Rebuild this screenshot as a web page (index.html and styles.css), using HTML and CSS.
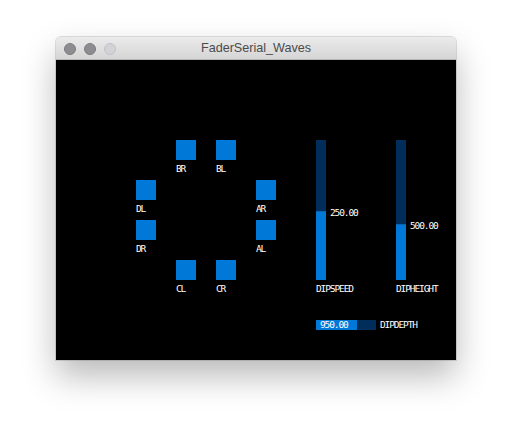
FILE: index.html
```html
<!DOCTYPE html>
<html lang="en">
<head>
  <meta charset="UTF-8" />
  <title>FaderSerial_Waves</title>
  <link rel="stylesheet" href="styles.css">
</head>
<body>
  <div class="window">
    <div class="titlebar">
      <div class="lights">
        <span class="light"></span>
        <span class="light"></span>
        <span class="light off"></span>
      </div>
      <div class="title">FaderSerial_Waves</div>
    </div>
    <div class="canvas">
      <div class="pads">
        <div class="cell"></div>
        <div class="cell"><div class="pad"></div><div class="lbl">BR</div></div>
        <div class="cell"><div class="pad"></div><div class="lbl">BL</div></div>
        <div class="cell"></div>

        <div class="cell"><div class="pad"></div><div class="lbl">DL</div></div>
        <div class="cell"></div>
        <div class="cell"></div>
        <div class="cell"><div class="pad"></div><div class="lbl">AR</div></div>

        <div class="cell"><div class="pad"></div><div class="lbl">DR</div></div>
        <div class="cell"></div>
        <div class="cell"></div>
        <div class="cell"><div class="pad"></div><div class="lbl">AL</div></div>

        <div class="cell"></div>
        <div class="cell"><div class="pad"></div><div class="lbl">CL</div></div>
        <div class="cell"><div class="pad"></div><div class="lbl">CR</div></div>
        <div class="cell"></div>
      </div>

      <div class="faders">
        <div class="vfader">
          <div class="track">
            <div class="fill" style="height:69px"><span class="value">250.00</span></div>
          </div>
          <div class="lbl name">DIPSPEED</div>
        </div>
        <div class="vfader">
          <div class="track">
            <div class="fill" style="height:56px"><span class="value">500.00</span></div>
          </div>
          <div class="lbl name">DIPHEIGHT</div>
        </div>
        <div class="hfader">
          <div class="htrack">
            <div class="hfill" style="width:41px"></div>
            <span class="hvalue">950.00</span>
          </div>
          <div class="lbl">DIPDEPTH</div>
        </div>
      </div>
    </div>
  </div>
</body>
</html>
```

FILE: styles.css
```css
* { margin: 0; padding: 0; box-sizing: border-box; }
html, body {
  width: 100%; height: 100%; overflow: hidden;
  background: #fff;
}
body { padding: 37px 0 0 56px; }

.window {
  width: 400px;
  border-radius: 5px 5px 0 0;
  box-shadow: 0 0 0 1px rgba(0,0,0,0.12), 0 16px 34px rgba(0,0,0,0.28);
}
.titlebar {
  height: 23px; position: relative;
  display: flex; align-items: center; justify-content: center;
  background: linear-gradient(to bottom, #ebebeb, #d5d5d5);
  border-bottom: 1px solid #b4b4b4;
  border-radius: 5px 5px 0 0;
}
.lights { position: absolute; left: 8px; top: 6px; display: flex; gap: 8px; }
.light {
  width: 12px; height: 12px; border-radius: 50%;
  background: #8d8c91; border: 1px solid #7c7b80;
}
.light.off { background: #d3d2d6; border-color: #c2c1c5; }
.title {
  font-family: "Liberation Sans", Arial, sans-serif; font-size: 12.6px;
  color: #4b4b4b;
}

.canvas {
  height: 300px; background: #000;
  display: flex; gap: 20px;
  padding: 80px 0 0 80px;
}

.lbl, .value, .hvalue {
  font-family: "DejaVu Sans Mono", monospace; font-size: 9.5px; line-height: 9px;
  letter-spacing: -1.1px; color: #fff; white-space: nowrap;
}

.pads {
  display: grid; grid-template-columns: repeat(4, 40px); grid-auto-rows: 40px;
  align-self: flex-start;
}
.pad { width: 20px; height: 20px; background: #0078d7; }
.cell .lbl { margin-top: 4px; }

.faders {
  display: grid; grid-template-columns: 80px 80px; grid-template-rows: 180px auto;
  align-self: flex-start;
}
.track {
  width: 10px; height: 140px; position: relative; background: #002d5a;
}
.fill {
  position: absolute; left: 0; bottom: 0; width: 10px;
  background: #0078d7; border-top: 1px solid #0a63b0;
}
.value { position: absolute; left: 14px; top: -4px; }
.name { margin-top: 4px; }

.hfader { grid-column: 1 / 3; display: flex; gap: 4px; align-items: flex-start; }
.htrack {
  width: 60px; height: 10px; position: relative; background: #002d5a;
  display: flex;
}
.hfill { height: 10px; background: #0078d7; }
.hvalue { position: absolute; left: 4px; top: 0; }
```
